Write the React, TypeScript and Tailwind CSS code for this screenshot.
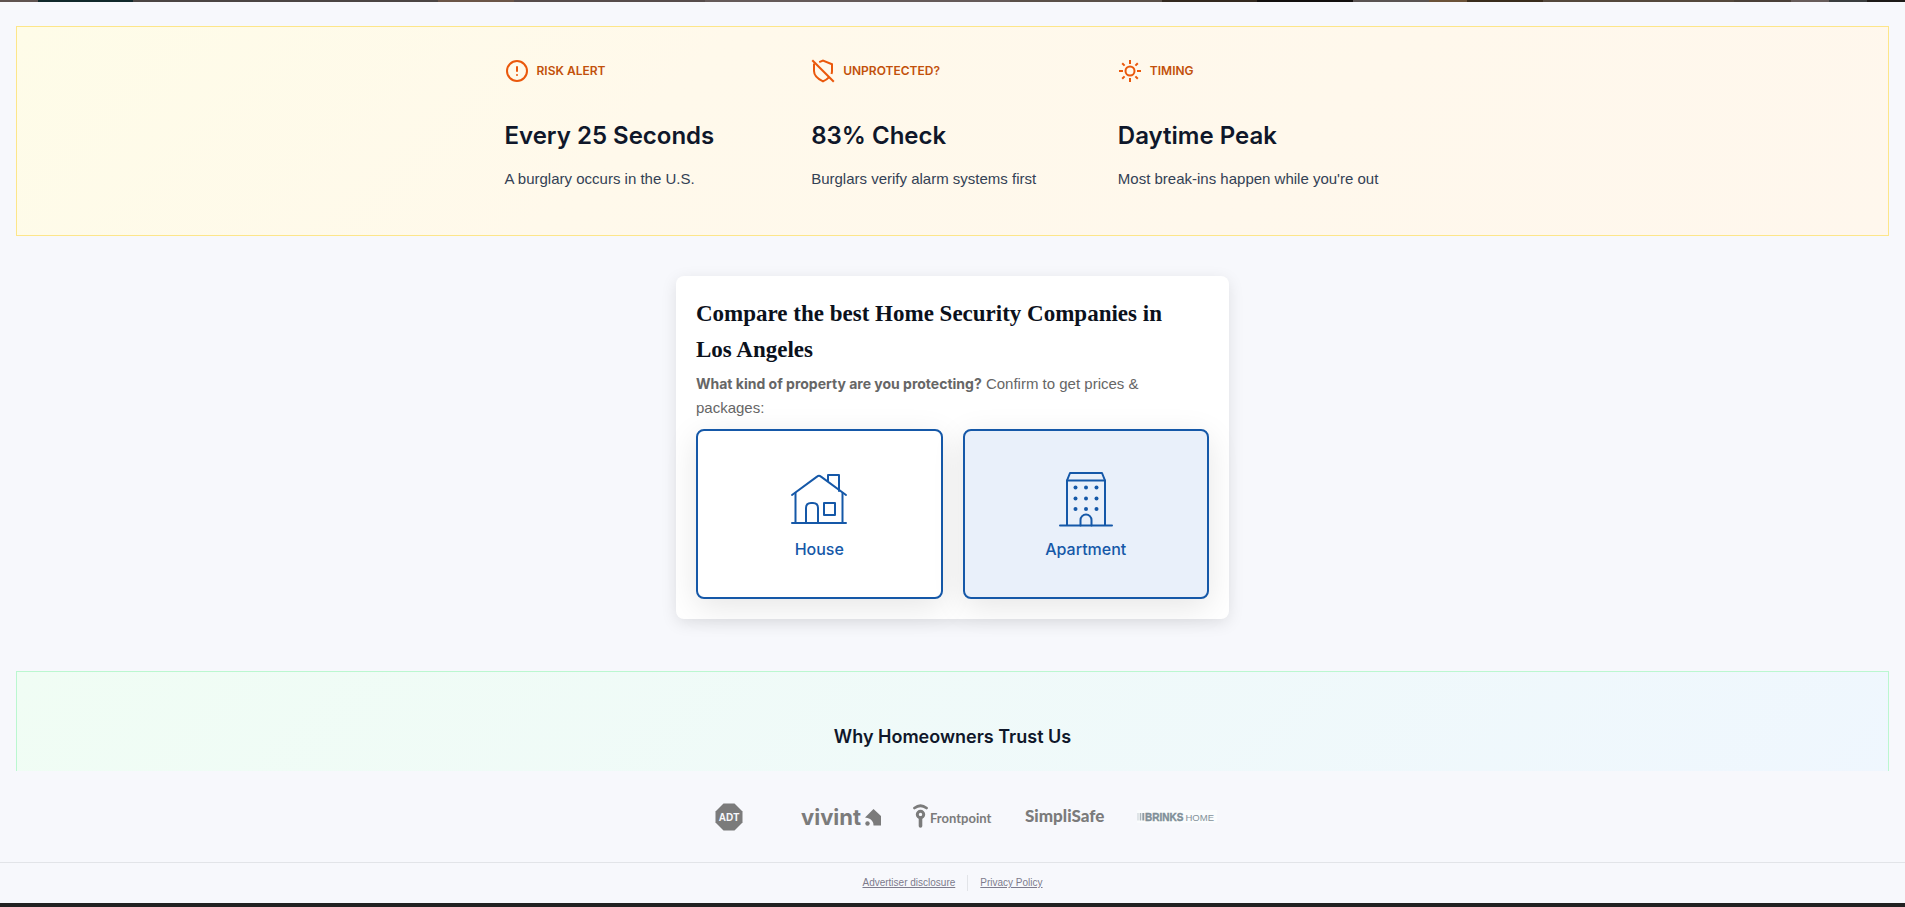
import React, { useState } from "react";
import { CircleAlert } from "lucide-react";

const SANS = "font-['Inter','Liberation_Sans',sans-serif]";

const ShieldSlash = () => (
  <svg viewBox="0 0 24 24" className="size-6 text-[#ea580c]" fill="none" stroke="currentColor" strokeWidth="2" aria-hidden="true">
    <path d="M1.3 1.3 22.8 22.8" />
    <path d="M3 4.6V12c0 5 4 8 9 10.4 2.6-1.2 4.8-2.700 6.400-4.500" />
    <path d="M8.2 3.2 12 1.6 21 5.200V12c0 1.200-.2 2.100-.5 3" />
  </svg>
);

const SunIcon = () => (
  <svg viewBox="0 0 24 24" className="size-6 text-[#ea580c]" fill="none" stroke="currentColor" strokeWidth="2" aria-hidden="true">
    <circle cx="12" cy="12" r="4.500" />
    <path d="M12 1v4M12 19v4M1 12h4M19 12h4M4.2 4.2 6.6 6.6M17.4 17.4l2.4 2.4M4.2 19.8l2.4-2.4M17.4 6.6l2.4-2.4" />
  </svg>
);

const facts = [
  { icon: <CircleAlert className="size-6 text-[#ea580c]" aria-hidden="true" />, tag: "RISK ALERT", title: "Every 25 Seconds", text: "A burglary occurs in the U.S." },
  { icon: <ShieldSlash />, tag: "UNPROTECTED?", title: "83% Check", text: "Burglars verify alarm systems first" },
  { icon: <SunIcon />, tag: "TIMING", title: "Daytime Peak", text: "Most break-ins happen while you're out" },
];

const HouseIcon = () => (
  <svg viewBox="0 0 60 60" className="size-[60px]" fill="none" stroke="currentColor" strokeWidth="2" strokeLinecap="round" strokeLinejoin="round" aria-hidden="true">
    <path d="M3 26 28 7.600Q30 6 32 7.600L57 26" />
    <path d="M39 12V6h11v16" />
    <path d="M6.500 24v30M53.500 24v30M3 54h54" />
    <path d="M17 54V39q0-5 5-5h2q5 0 5 5v15" />
    <path d="M35 34h11v12H35z" />
  </svg>
);

const ApartmentIcon = () => (
  <svg viewBox="0 0 60 60" className="size-[60px]" fill="none" stroke="currentColor" strokeWidth="2" strokeLinecap="round" strokeLinejoin="round" aria-hidden="true">
    <path d="M4 56.500h52M11 56.500v-45h38v45" />
    <path d="M11 11.500l3-7.500h32l3 7.500" />
    <path d="M24.500 56.500V51a5.500 5.500 0 0 1 11 0v5.500" />
    <g fill="currentColor" stroke="none">
      {[19.5, 30, 40.5].map((x) => [18.5, 29.5, 40].map((y) => <circle key={x + "-" + y} cx={x} cy={y} r="2" />))}
    </g>
  </svg>
);

const AdtLogo = () => (
  <svg viewBox="0 0 80 28" className="h-7 w-20" role="img" aria-label="ADT">
    <path d="M34.500.5h11l8 8v11l-8 8h-11l-8-8v-11z" fill="#7b7b7b" />
    <text x="40" y="17.500" textAnchor="middle" fill="#f7f8fc" fontFamily="Liberation Sans, sans-serif" fontWeight="700" fontSize="10">ADT</text>
  </svg>
);

const VivintLogo = () => (
  <svg viewBox="0 0 80 28" className="h-7 w-20" role="img" aria-label="vivint">
    <text x="0" y="21.500" fill="#7b7b7b" fontFamily="Inter, sans-serif" fontWeight="700" fontSize="22">vivint</text>
    <path d="M64 14.500 72.500 6 80 13v9.500h-7.500q0-6-6-7.500z" fill="#7b7b7b" />
    <circle cx="66.500" cy="20.500" r="2.200" fill="#7b7b7b" />
  </svg>
);

const FrontpointLogo = () => (
  <svg viewBox="0 0 80 28" className="h-7 w-20" role="img" aria-label="Frontpoint">
    <path d="M1.500 5q6-4.500 12 0" fill="none" stroke="#7b7b7b" strokeWidth="2.800" strokeLinecap="round" />
    <circle cx="7.500" cy="11.500" r="3.200" fill="none" stroke="#7b7b7b" strokeWidth="3" />
    <path d="M7.500 15v8" stroke="#7b7b7b" strokeWidth="3.600" strokeLinecap="round" />
    <text x="17" y="20" fill="#7b7b7b" fontFamily="Lato, sans-serif" fontWeight="700" fontSize="13">Frontpoint</text>
  </svg>
);

const SimpliSafeLogo = () => (
  <svg viewBox="0 0 80 28" className="h-7 w-20" role="img" aria-label="SimpliSafe">
    <text x="0" y="18.500" fill="#7b7b7b" fontFamily="Lato, sans-serif" fontWeight="900" fontSize="17">SimpliSafe</text>
  </svg>
);

const BrinksLogo = () => (
  <svg viewBox="0 0 80 28" className="h-7 w-20" role="img" aria-label="Brinks Home">
    <path d="M0 7h80v13H0z" fill="#fafcfd" />
    <path d="M1 10v7.500" stroke="#c5cdd2" />
    <path d="M3.500 10v7.500" stroke="#a9b4ba" strokeWidth="1.500" />
    <path d="M6.300 10v7.500" stroke="#8e9ba3" strokeWidth="2" />
    <text x="8" y="17.500" fill="#7f8f98" stroke="#7f8f98" strokeWidth="0.400" fontFamily="Liberation Sans, sans-serif" fontWeight="700" fontSize="10">BRINKS</text>
    <text x="48.500" y="17.500" fill="#84929a" fontFamily="Liberation Sans, sans-serif" fontSize="9.500">HOME</text>
  </svg>
);

const choices = [
  { name: "House", icon: <HouseIcon />, look: "bg-white" },
  { name: "Apartment", icon: <ApartmentIcon />, look: "bg-[#e9f0fa]" },
];

export default function App() {
  const [, setChoice] = useState("");
  return (
    <div className="flex h-screen flex-col overflow-hidden bg-[#f7f8fc] font-['Liberation_Sans',Arial,sans-serif]">
      <div className="h-[2px] shrink-0 bg-[linear-gradient(90deg,#5f5350_0_2%,#10282b_2%_7%,#4b4543_7%_23%,#6b5547_23%_27%,#564c4b_27%_37%,#655a59_37%_53%,#5a5048_53%_61%,#33291f_61%_66%,#120f0e_66%_71%,#5a5352_71%_75%,#6b5238_75%_77%,#392c1c_77%_81%,#54483c_81%_91%,#4a4038_91%_94%,#675c5a_94%_96%,#3a3d3e_96%_98%,#1d1a18_98%)]" />
      <main className="min-h-0 flex-1 overflow-hidden px-4 pt-6">
        <section className="border border-[#fde68a] bg-linear-135 from-[#fefce8] via-[#fff9eb] via-35% to-[#fff7ed] px-4 py-8">
          <div className="mx-auto grid max-w-4xl grid-cols-3 gap-6">
            {facts.map((f) => (
              <article key={f.tag} className="pb-3">
                <div className={`flex items-center gap-2 text-xs font-semibold text-[#c2500a] ${SANS}`}>
                  {f.icon}
                  {f.tag}
                </div>
                <h3 className={`mt-9 text-2xl leading-[34px] font-semibold text-[#0f172a] ${SANS}`}>{f.title}</h3>
                <p className="mt-[14px] text-[15px] leading-6 text-[#334155]">{f.text}</p>
              </article>
            ))}
          </div>
        </section>

        <section className="mx-auto mt-10 max-w-[553px] rounded-lg bg-white p-5 shadow-[0_4px_16px_rgba(0,0,0,0.1)]">
          <h1 className="font-['Liberation_Serif',serif] text-[23px] leading-9 font-bold text-[#0b111c]">
            Compare the best Home Security Companies in
            <br />
            Los Angeles
          </h1>
          <p className="mt-1 text-[15px] leading-6 text-[#666]">
            <strong className={`text-sm leading-6 font-bold ${SANS}`}>What kind of property are you protecting?</strong> Confirm to get prices &amp;
            <br />
            packages:
          </p>
          <div className="mt-[9px] grid grid-cols-2 gap-5">
            {choices.map((c) => (
              <button
                key={c.name}
                type="button"
                onClick={() => setChoice(c.name)}
                className={`flex h-[170px] flex-col items-center justify-center gap-2 rounded-lg border-2 border-[#1558a8] pt-0.5 text-base font-medium text-[#1558a8] shadow-[0_8px_32px_rgba(0,0,0,0.1)] ${c.look} ${SANS}`}
              >
                {c.icon}
                {c.name}
              </button>
            ))}
          </div>
        </section>

        <section className="mt-[52px] h-[300px] border border-[#bbf7d0] bg-linear-135 from-[#f0fdf4] to-[#eff6ff] pt-[51px]">
          <h2 className={`text-center text-lg leading-7 font-semibold text-[#0f172a] ${SANS}`}>Why Homeowners Trust Us</h2>
        </section>
      </main>

      <footer className="shrink-0 border-b-4 border-[#212121]">
        <div className="flex h-[91px] items-center justify-center gap-8">
          <AdtLogo />
          <VivintLogo />
          <FrontpointLogo />
          <SimpliSafeLogo />
          <BrinksLogo />
        </div>
        <nav className="flex h-[41px] items-center justify-center border-t border-[#e2e4e8] text-[10px] leading-4 text-[#7d7b8c]">
          <a href="#disclosure" className="border-r border-[#e2e4e8] pr-3 underline">Advertiser disclosure</a>
          <a href="#privacy" className="pl-3 underline">Privacy Policy</a>
        </nav>
      </footer>
    </div>
  );
}
